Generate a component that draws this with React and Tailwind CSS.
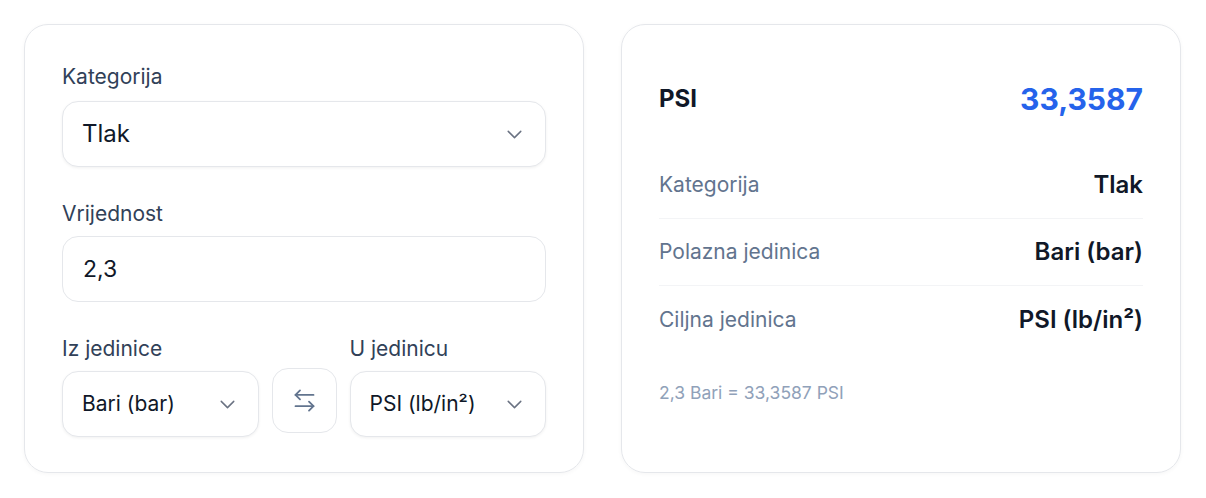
import React from "react";
import { ChevronDown, ArrowLeftRight } from "lucide-react";

function Select({ value, big }) {
  return (
    <div className={`flex items-center justify-between rounded-2xl border border-gray-200 bg-white shadow-[0_1px_3px_rgba(0,0,0,0.06)] pl-[19px] pr-[18px] h-[66px] ${big ? "text-[24px]" : "text-[21px]"} text-gray-900`}>
      <span>{value}</span>
      <ChevronDown size={25} strokeWidth={1.4} className="text-gray-500" />
    </div>
  );
}

function Row({ label, value, last }) {
  return (
    <div className={`flex items-center justify-between h-[67px] ${last ? "" : "border-b border-gray-100"}`}>
      <span className="text-[21px] text-slate-500">{label}</span>
      <span className="text-[24px] font-semibold text-gray-900">{value}</span>
    </div>
  );
}

export default function App() {
  return (
    <div className="w-[1206px] h-[498px] bg-white flex gap-[37px] px-6 pt-6" style={{ fontFamily: "Inter, 'Noto Sans', sans-serif" }}>
      <div className="w-[560px] h-[449px] rounded-3xl border border-gray-200 shadow-[0_1px_4px_rgba(0,0,0,0.04)] px-[37px] pt-[38px]">
        <div className="text-[21px] text-slate-700 leading-[28px] mb-[10px]">Kategorija</div>
        <Select value="Tlak" big />
        <div className="text-[21px] text-slate-700 leading-[28px] mt-[33px] mb-[8px]">Vrijednost</div>
        <div className="flex items-center h-[66px] rounded-2xl border border-gray-200 pl-5 text-[23px] text-gray-900">2,3</div>
        <div className="flex items-end gap-[13px] mt-[33px]">
          <div className="flex-1">
            <div className="text-[21px] text-slate-700 leading-[28px] mb-[8px]">Iz jedinice</div>
            <Select value="Bari (bar)" />
          </div>
          <div className="w-[65px] h-[65px] mb-[4px] rounded-2xl border border-gray-200 flex items-center justify-center text-slate-500">
            <ArrowLeftRight size={27} strokeWidth={1.6} />
          </div>
          <div className="flex-1">
            <div className="text-[21px] text-slate-700 leading-[28px] mb-[8px]">U jedinicu</div>
            <Select value="PSI (lb/in²)" />
          </div>
        </div>
      </div>
      <div className="w-[560px] h-[449px] rounded-3xl border border-gray-200 shadow-[0_1px_4px_rgba(0,0,0,0.04)] px-[37px] pt-[37px]">
        <div className="flex items-center justify-between h-[74px] mb-[16px]">
          <span className="text-[24px] font-bold text-gray-900">PSI</span>
          <span className="text-[30px] font-bold text-[#2563eb]">33,3587</span>
        </div>
        <Row label="Kategorija" value="Tlak" />
        <Row label="Polazna jedinica" value="Bari (bar)" />
        <Row label="Ciljna jedinica" value="PSI (lb/in²)" last />
        <div className="text-[17.5px] text-slate-400 mt-[27px]">2,3 Bari = 33,3587 PSI</div>
      </div>
    </div>
  );
}
